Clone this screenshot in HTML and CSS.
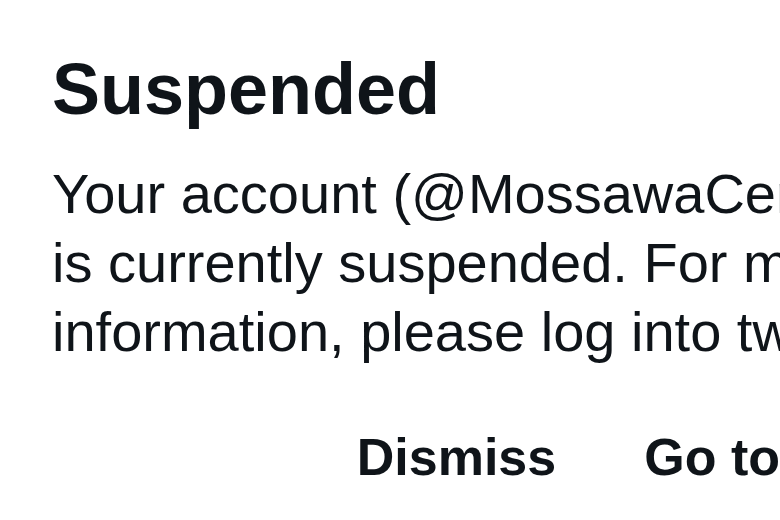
FILE: index.html
```html
<!DOCTYPE html>
<html lang="en">
<head>
<meta charset="utf-8">
<title>Suspended</title>
<link rel="stylesheet" href="styles.css">
</head>
<body>
<div class="dialog">
  <h1 class="title">Suspended</h1>
  <p class="message">
    <span class="line">Your account (@MossawaCenter)</span>
    <span class="line">is currently suspended. For more</span>
    <span class="line">information, please log into twitter.com.</span>
  </p>
  <div class="actions">
    <span class="btn">Dismiss</span>
    <span class="btn">Go to Twitter</span>
  </div>
</div>
</body>
</html>
```
FILE: styles.css
```css
html, body {
  margin: 0;
  padding: 0;
  background: #ffffff;
  overflow: hidden;
}
body {
  width: 780px;
  height: 520px;
  font-family: "Liberation Sans", Arial, sans-serif;
  color: #0f1419;
}
.dialog {
  width: 909px;
  padding: 49px 0 0 52px;
}
.title {
  margin: 0;
  font-size: 72px;
  line-height: 80px;
  font-weight: 700;
}
.message {
  margin: 30px 0 0 0;
  font-size: 56px;
  line-height: 69px;
  font-weight: 400;
}
.line {
  display: block;
  white-space: nowrap;
}
.actions {
  margin-top: 61px;
  display: flex;
  justify-content: flex-end;
  gap: 88px;
}
.btn {
  font-size: 52px;
  line-height: 60px;
  font-weight: 700;
  white-space: nowrap;
}
```
